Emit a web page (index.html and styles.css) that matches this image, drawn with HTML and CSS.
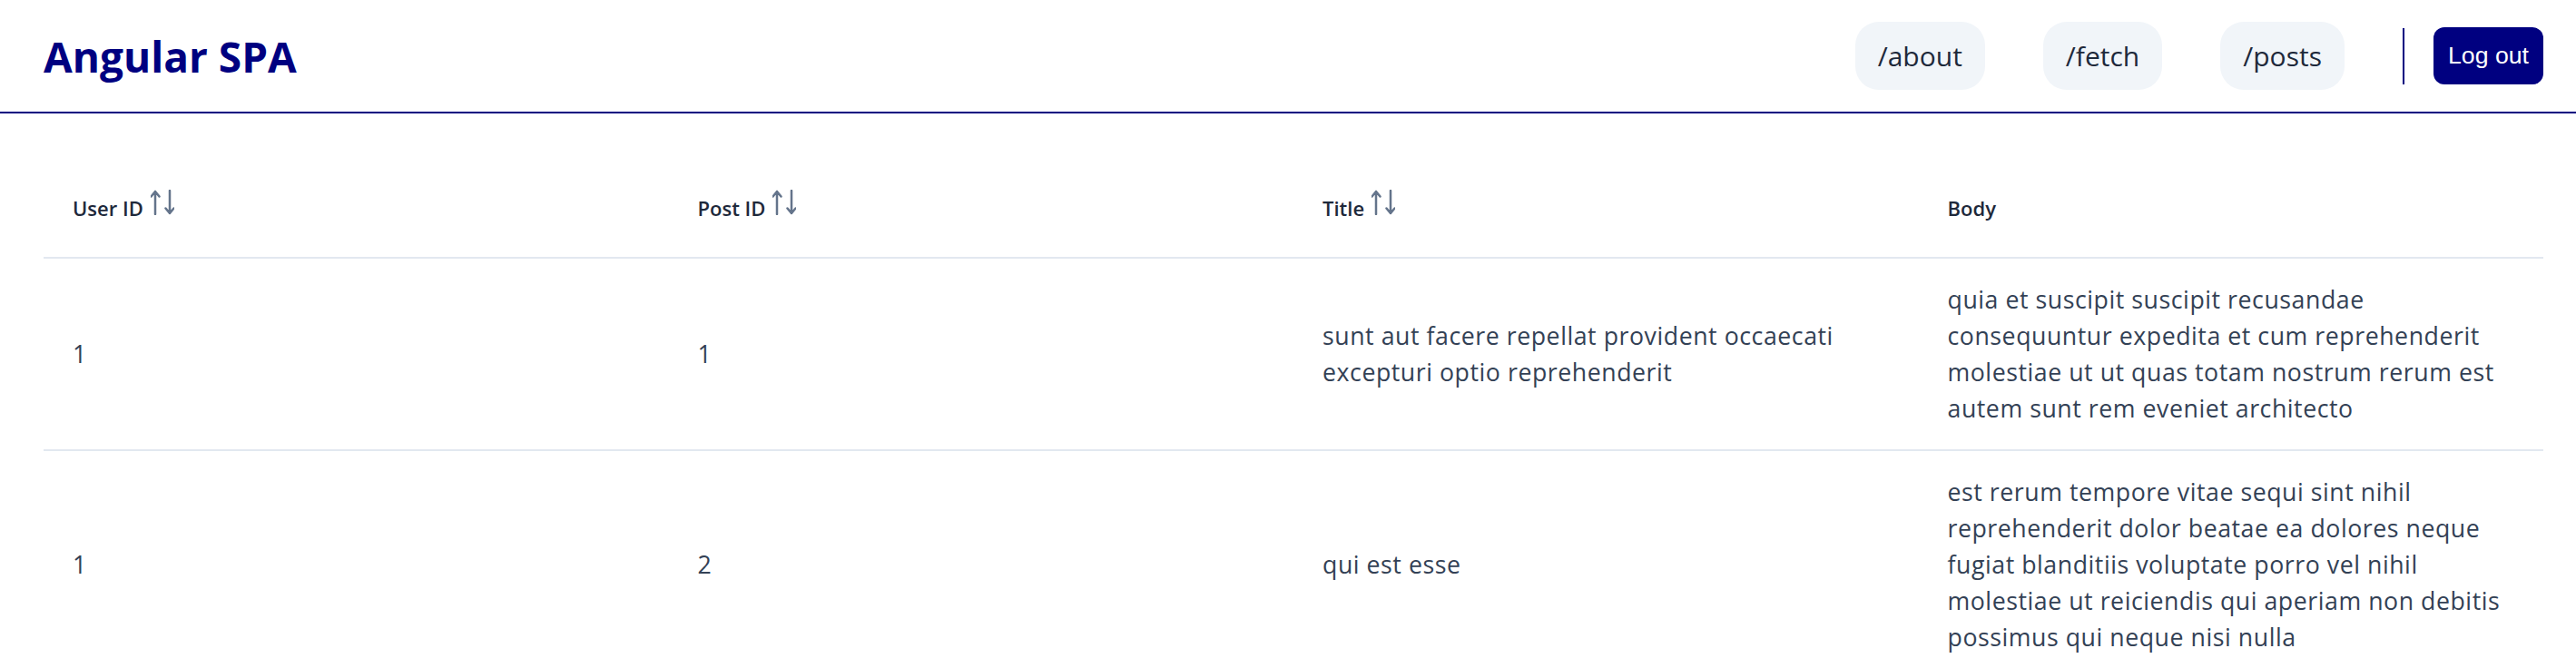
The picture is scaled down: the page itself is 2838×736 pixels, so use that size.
FILE: index.html
```html
<!DOCTYPE html>
<html lang="en">
<head>
<meta charset="utf-8">
<title>Angular SPA</title>
<link rel="stylesheet" href="styles.css">
</head>
<body>
<header class="topbar">
  <h1 class="brand">Angular SPA</h1>
  <nav class="nav">
    <a class="pill" href="#">/about</a>
    <a class="pill" href="#">/fetch</a>
    <a class="pill" href="#">/posts</a>
    <div class="actions">
      <span class="divider"></span>
      <button class="logout" type="button">Log out</button>
    </div>
  </nav>
</header>
<main class="content">
  <table class="posts">
    <thead>
      <tr>
        <th><span class="th-inner">User ID <svg class="sort" viewBox="0 0 26 28" width="26" height="28"><path d="M5 27V2M0.5 7.5L5 2l4.5 5.5M21 1v25M16.5 20.5L21 26l4.5-5.5"/></svg></span></th>
        <th><span class="th-inner">Post ID <svg class="sort" viewBox="0 0 26 28" width="26" height="28"><path d="M5 27V2M0.5 7.5L5 2l4.5 5.5M21 1v25M16.5 20.5L21 26l4.5-5.5"/></svg></span></th>
        <th><span class="th-inner">Title <svg class="sort" viewBox="0 0 26 28" width="26" height="28"><path d="M5 27V2M0.5 7.5L5 2l4.5 5.5M21 1v25M16.5 20.5L21 26l4.5-5.5"/></svg></span></th>
        <th><span class="th-inner">Body</span></th>
      </tr>
    </thead>
    <tbody>
      <tr>
        <td>1</td>
        <td>1</td>
        <td>sunt aut facere repellat provident occaecati excepturi optio reprehenderit</td>
        <td>quia et suscipit suscipit recusandae consequuntur expedita et cum reprehenderit molestiae ut ut quas totam nostrum rerum est autem sunt rem eveniet architecto</td>
      </tr>
      <tr>
        <td>1</td>
        <td>2</td>
        <td>qui est esse</td>
        <td>est rerum tempore vitae sequi sint nihil reprehenderit dolor beatae ea dolores neque fugiat blanditiis voluptate porro vel nihil molestiae ut reiciendis qui aperiam non debitis possimus qui neque nisi nulla</td>
      </tr>
    </tbody>
  </table>
</main>
</body>
</html>
```
FILE: styles.css
```css
html, body {
  margin: 0;
  padding: 0;
  background: #ffffff;
}

body {
  font-family: "Open Sans", "Noto Sans", sans-serif;
  color: #334155;
}

.topbar {
  display: flex;
  align-items: center;
  justify-content: space-between;
  height: 123px;
  padding: 0 36px 0 48px;
  border-bottom: 2px solid #000080;
}

.brand {
  margin: 0;
  font-size: 46px;
  line-height: 1;
  font-weight: 700;
  color: #000080;
}

.nav {
  display: flex;
  align-items: center;
  gap: 64px;
}

.pill {
  display: block;
  font-size: 30px;
  line-height: 47px;
  padding: 14px 25px;
  border-radius: 26px;
  background: #f1f5f9;
  color: #1e293b;
  text-decoration: none;
}

.actions {
  display: flex;
  align-items: center;
  gap: 32px;
}

.divider {
  display: block;
  width: 2px;
  height: 62px;
  background: #000080;
}

.logout {
  font-family: "Liberation Sans", Arial, sans-serif;
  font-size: 26.7px;
  height: 63px;
  padding: 0 16px;
  border: 0;
  border-radius: 12px;
  background: #000080;
  color: #ffffff;
}

.content {
  padding: 49px 36px 0 48px;
}

.posts {
  width: 100%;
  border-collapse: collapse;
  table-layout: fixed;
}

.posts th {
  text-align: left;
  padding: 35px 32px 34px;
  font-size: 22px;
  line-height: 33px;
  font-weight: 600;
  color: #1e293b;
  border-bottom: 2px solid #e2e8f0;
}

.th-inner {
  display: inline-flex;
  align-items: center;
  gap: 8px;
}

.sort {
  margin-bottom: 12px;
  fill: none;
  stroke: #64748b;
  stroke-width: 2.5;
  stroke-linecap: round;
  stroke-linejoin: round;
}

.posts td {
  padding: 25px 32px;
  font-size: 26.7px;
  line-height: 40px;
  letter-spacing: 0.55px;
  color: #334155;
  vertical-align: middle;
  border-bottom: 2px solid #e2e8f0;
}
```
